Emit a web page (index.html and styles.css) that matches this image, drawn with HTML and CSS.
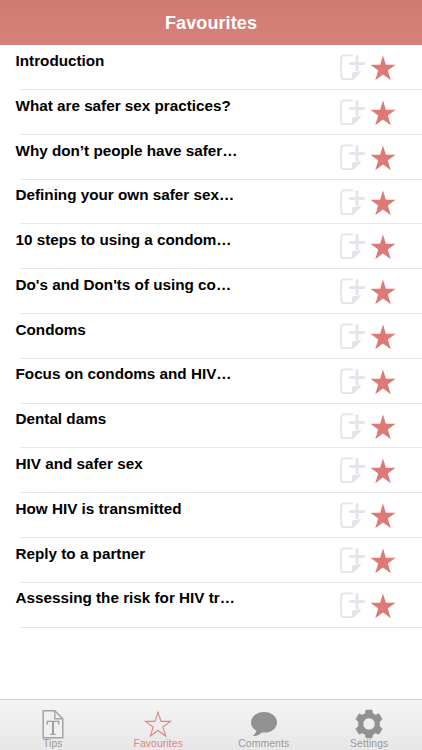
FILE: index.html
```html
<!DOCTYPE html>
<html>
	<head>
		<meta charset="UTF-8">
		<title>Favourites</title>
		<link rel="stylesheet" href="styles.css">
	</head>
	
	<body>
		<!-- shared row icons -->
		<svg class="defs">
			<symbol id="note" viewBox="0 0 26 26">
				<path d="M13 1.4H3.7Q1.2 1.4 1.2 3.9V22.7Q1.2 25.1 3.7 25.1H12.6L19.6 18.1" fill="none" stroke="#e4e4eb" stroke-width="1.8"/>
				<path d="M11.8 25.8V20.4Q11.8 17.8 14.3 18Q17.8 18 20.5 16.4V18.7L13.4 25.8Z" fill="#e4e4eb"/>
				<path d="M17 2.4V15.8M10.3 9.4H23.7" fill="none" stroke="#e4e4eb" stroke-width="3" stroke-linecap="round"/>
			</symbol>
			<symbol id="star" viewBox="0 0 26 26">
				<path d="M13 .5L15.9 9.8H25.6L17.8 15.5L20.8 25.3L13 19.4L5.2 25.3L8.2 15.5L.4 9.8H10.1Z" fill="#de7a75"/>
			</symbol>
		</svg>
		
		<div class="header">Favourites</div>
		
		<ul class="list">
			<li><p>Introduction</p><svg><use href="#note"/></svg><svg><use href="#star"/></svg></li>
			<li><p>What are safer sex practices?</p><svg><use href="#note"/></svg><svg><use href="#star"/></svg></li>
			<li><p>Why don’t people have safer…</p><svg><use href="#note"/></svg><svg><use href="#star"/></svg></li>
			<li><p>Defining your own safer sex…</p><svg><use href="#note"/></svg><svg><use href="#star"/></svg></li>
			<li><p>10 steps to using a condom…</p><svg><use href="#note"/></svg><svg><use href="#star"/></svg></li>
			<li><p>Do's and Don'ts of using co…</p><svg><use href="#note"/></svg><svg><use href="#star"/></svg></li>
			<li><p>Condoms</p><svg><use href="#note"/></svg><svg><use href="#star"/></svg></li>
			<li><p>Focus on condoms and HIV…</p><svg><use href="#note"/></svg><svg><use href="#star"/></svg></li>
			<li><p>Dental dams</p><svg><use href="#note"/></svg><svg><use href="#star"/></svg></li>
			<li><p>HIV and safer sex</p><svg><use href="#note"/></svg><svg><use href="#star"/></svg></li>
			<li><p>How HIV is transmitted</p><svg><use href="#note"/></svg><svg><use href="#star"/></svg></li>
			<li><p>Reply to a partner</p><svg><use href="#note"/></svg><svg><use href="#star"/></svg></li>
			<li><p>Assessing the risk for HIV tr…</p><svg><use href="#note"/></svg><svg><use href="#star"/></svg></li>
		</ul>
		
		<div class="tabs">
			<a class="tab">
				<svg viewBox="0 0 30 30">
					<path d="M5.2 1.7H16.8L24.8 9.7V28.7H5.2Z" fill="#f0f0f0" stroke="#a4a4a4" stroke-width="1.5"/>
					<path d="M16.8 1.7V9.7H24.8" fill="none" stroke="#a4a4a4" stroke-width="1.4"/>
					<path d="M9.3 15.5V12.3H20.7V15.5M12.2 25.3H17.8" fill="none" stroke="#a0a0a0" stroke-width="1.3"/>
					<path d="M15 12.3V25.2" stroke="#a0a0a0" stroke-width="2"/>
				</svg>
				<span>Tips</span>
			</a>
			<a class="tab on">
				<svg viewBox="0 0 30 30">
					<path d="M15 3.2L18 12.4H27.4L19.8 18L22.7 27L15 21.5L7.3 27L10.2 18L2.6 12.4H12Z" fill="none" stroke="#e08580" stroke-width="1.1"/>
				</svg>
				<span>Favourites</span>
			</a>
			<a class="tab">
				<svg viewBox="0 0 30 30">
					<path d="M15 3C22.2 3 28 7.5 28 13.4C28 19.2 22.2 23.6 15.5 23.6L12.8 23.5C10.5 25.8 7.5 27.3 3.8 27C5.8 25.4 7 23.6 7.3 21.6C4 19.7 2 16.8 2 13.4C2 7.5 7.8 3 15 3Z" fill="#919191"/>
				</svg>
				<span>Comments</span>
			</a>
			<a class="tab">
				<svg viewBox="0 0 30 30">
					<path fill-rule="evenodd" d="M12 1H18L18.9 4.6L21.4 6L25 4.8L28.2 10.2L25.6 12.8V17.2L28.2 19.8L25 25.2L21.4 24L18.9 25.4L18 29H12L11.1 25.4L8.6 24L5 25.2L1.8 19.8L4.4 17.2V12.8L1.8 10.2L5 4.8L8.6 6L11.1 4.6ZM15 9A6 6 0 1 0 15 21A6 6 0 1 0 15 9Z" fill="#919191" stroke="#919191" stroke-width=".5" stroke-linejoin="round"/>
				</svg>
				<span>Settings</span>
			</a>
		</div>
	</body>
</html>
```
FILE: styles.css
```css
*{
	margin: 0;
	padding: 0;
	box-sizing: border-box;
}
body{
	display: flex;
	flex-direction: column;
	height: 750px;
	overflow: hidden;
	background: #fff;
	font-family: "Liberation Sans", Arial, sans-serif;
}
.defs{
	display: none;
}
.header{
	height: 45.3px;
	line-height: 47px;
	text-align: center;
	color: #fff;
	font-size: 18px;
	font-weight: bold;
	letter-spacing: 0.1px;
	background: linear-gradient(#cf7a73, #d7817a);
}
.list{
	flex: 1;
	list-style: none;
}
.list li{
	display: flex;
	height: 44.8px;
	padding: 9px 26px 0 15.5px;
	background: linear-gradient(#e6e6e8, #e6e6e8) 20px 100% / 100% 1px no-repeat;
}
.list p{
	flex: 1;
	margin-top: -2.4px;
	line-height: 18px;
	font-size: 15.25px;
	font-weight: bold;
	color: #000;
	white-space: nowrap;
}
.list svg{
	width: 26px;
	height: 26px;
}
.list svg + svg{
	margin: 1px 0 0 4.5px;
}
.tabs{
	display: flex;
	height: 51px;
	border-top: 1px solid #d2d2d2;
	background: linear-gradient(#f4f4f4, #e7e7e7);
}
.tab{
	flex: 1;
	display: flex;
	flex-direction: column;
	align-items: center;
	padding-top: 9px;
	font-size: 10.4px;
	line-height: 12px;
	letter-spacing: 0.1px;
	color: #999;
}
.tab svg{
	width: 30px;
	height: 30px;
	margin-bottom: -1px;
}
.on{
	color: #e08580;
}
```
